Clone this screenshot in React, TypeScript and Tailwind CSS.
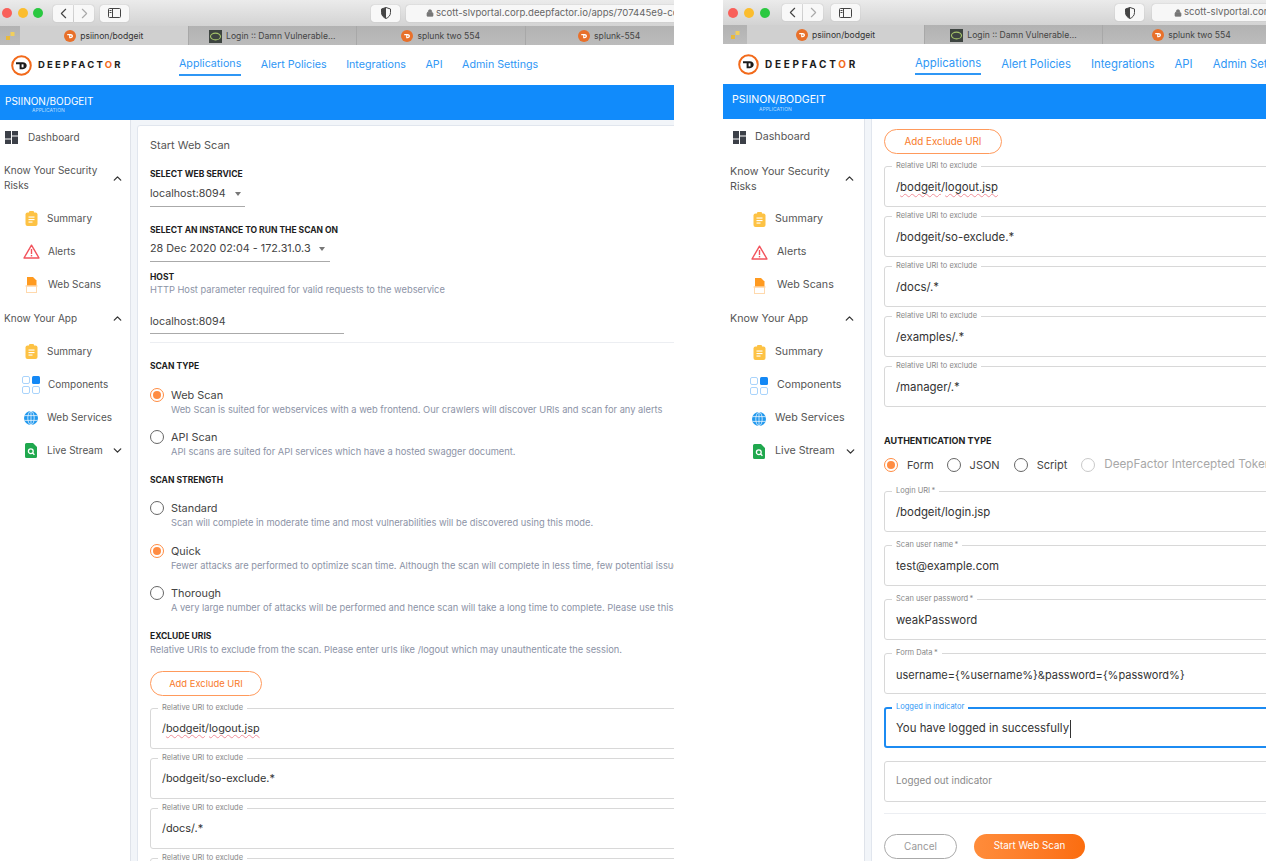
import React from "react";
import { ChevronUp, ChevronDown, ChevronLeft, ChevronRight, Lock } from "lucide-react";

const Favicon = () => (
  <svg width="12" height="12" viewBox="0 0 13 13" className="shrink-0">
    <circle cx="6.5" cy="6.5" r="6.5" fill="#e8702a" />
    <path d="M3.5 4.2h3.6c1.6 0 2.6 1 2.6 2.4S8.7 9 7.1 9H5.6V5.6H3.5z" fill="#fff" />
    <rect x="6.8" y="6" width="1.2" height="1.6" fill="#e8702a" />
  </svg>
);

const DvwaIcon = () => (
  <svg width="13" height="13" viewBox="0 0 13 13" className="shrink-0">
    <rect width="13" height="13" fill="#3d4440" />
    <ellipse cx="6.5" cy="6.5" rx="5" ry="3.4" fill="none" stroke="#a5c46a" strokeWidth="1.1" />
  </svg>
);

const Logo = () => (
  <svg width="21" height="21" viewBox="0 0 21 21" className="shrink-0">
    <circle cx="10.5" cy="10.5" r="9.3" fill="#fff" stroke="#f26a1b" strokeWidth="2" />
    <path d="M5 7.2h6.8c2.3 0 3.9 1.4 3.9 3.4s-1.6 3.6-3.9 3.6H8.6V9.2H5z" fill="#1c1c1c" />
    <rect x="10.6" y="9.3" width="1.9" height="3.1" fill="#fff" />
  </svg>
);

const Dashboard = () => (
  <svg width="13" height="13" viewBox="0 0 13 13">
    <rect x="0" y="0" width="6" height="7.5" fill="#3c4048" />
    <rect x="7" y="0" width="6" height="4.5" fill="#3c4048" />
    <rect x="0" y="8.5" width="6" height="4.5" fill="#3c4048" />
    <rect x="7" y="5.5" width="6" height="7.5" fill="#3c4048" />
  </svg>
);

const Clipboard = () => (
  <svg width="13" height="15" viewBox="0 0 13 15">
    <rect x="0.5" y="1.5" width="12" height="13.5" rx="2" fill="#fdc244" />
    <rect x="4" y="0" width="5" height="3" rx="1" fill="#fdc244" />
    <rect x="3.5" y="5.5" width="6" height="1.1" fill="#fff" />
    <rect x="3.5" y="8" width="6" height="1.1" fill="#fff" />
    <rect x="3.5" y="10.5" width="4" height="1.1" fill="#fff" />
  </svg>
);

const Alert = () => (
  <svg width="17" height="15" viewBox="0 0 17 15">
    <path d="M8.5 1.2 16 14H1z" fill="#fff" stroke="#f2535c" strokeWidth="1.4" strokeLinejoin="round" />
    <rect x="7.8" y="5" width="1.4" height="5" fill="#f2535c" />
    <rect x="7.8" y="11" width="1.4" height="1.4" fill="#f2535c" />
  </svg>
);

const WebScan = () => (
  <svg width="13" height="16" viewBox="0 0 13 16">
    <path d="M2 0h6l3.5 3.5V9H2z" fill="#ff9a1f" />
    <path d="M0.5 9h12" stroke="#ffc98a" strokeWidth="1" />
    <rect x="1.5" y="9" width="10" height="6.5" fill="none" stroke="#ffd9ad" strokeWidth="1" />
  </svg>
);

const Components = () => (
  <svg width="18" height="18" viewBox="0 0 18 18">
    <rect x="0.5" y="0.5" width="7" height="7" rx="1.5" fill="#fff" stroke="#a9d3fb" />
    <rect x="10" y="0" width="8" height="8" rx="1.5" fill="#1488f5" />
    <rect x="0.5" y="10.5" width="7" height="7" rx="1.5" fill="#fff" stroke="#a9d3fb" />
    <rect x="10.5" y="10.5" width="7" height="7" rx="1.5" fill="#fff" stroke="#a9d3fb" />
  </svg>
);

const Globe = () => (
  <svg width="14" height="14" viewBox="0 0 14 14">
    <circle cx="7" cy="7" r="7" fill="#2299ee" />
    <g fill="none" stroke="#fff" strokeWidth="0.7">
      <ellipse cx="7" cy="7" rx="3.2" ry="6.8" />
      <path d="M7 0v14M0.4 4.6h13.2M0.4 9.4h13.2" />
    </g>
  </svg>
);

const LiveStream = () => (
  <svg width="12" height="15" viewBox="0 0 12 15">
    <path d="M1.5 0H8l4 4v9.5a1.5 1.5 0 0 1-1.5 1.5h-9A1.5 1.5 0 0 1 0 13.5v-12A1.5 1.5 0 0 1 1.5 0z" fill="#20a84e" />
    <circle cx="5.8" cy="8.2" r="2.4" fill="none" stroke="#fff" strokeWidth="1.3" />
    <path d="M7.6 10l1.8 1.8" stroke="#fff" strokeWidth="1.3" />
  </svg>
);

const Shield = () => (
  <svg width="10" height="12" viewBox="0 0 10 12">
    <path d="M5 0.5 9.5 2v3.5c0 3-2 5-4.5 6-2.5-1-4.5-3-4.5-6V2z" fill="none" stroke="#444" strokeWidth="1" />
    <path d="M5 0.5 0.5 2v3.5c0 3 2 5 4.5 6z" fill="#444" />
  </svg>
);

const SidebarToggle = () => (
  <svg width="13" height="10" viewBox="0 0 13 10" fill="none" stroke="#444" strokeWidth="1">
    <rect x="0.5" y="0.5" width="12" height="9" rx="1" />
    <path d="M4.5 0.5v9M1.5 2.5h2M1.5 4.5h2" />
  </svg>
);

function Toolbar({ url, right }: { url: string; right: boolean }) {
  const btn = "shrink-0 h-[17px] bg-[#f8f8f8] shadow-[0_0_1px_#9a9a9a] flex items-center justify-center";
  return (
    <div className={`flex items-center bg-gradient-to-b from-[#ebebeb] to-[#d3d3d3] ${right ? "h-[25px]" : "h-[26px]"}`}>
      <div className={`flex items-center shrink-0 ${right ? "gap-[6px] pl-[5px] w-[59px]" : "gap-[5.5px] pl-[2px] w-[53px]"}`}>
        <span className="w-[10px] h-[10px] rounded-full bg-[#f9605a]" />
        <span className="w-[10px] h-[10px] rounded-full bg-[#fbbd2e]" />
        <span className="w-[10px] h-[10px] rounded-full bg-[#2ac840]" />
      </div>
      <div className="flex gap-px shrink-0">
        <span className={`${btn} w-[20px] rounded-l-[3px] text-[#444]`}><ChevronLeft size={17} strokeWidth={1.6} /></span>
        <span className={`${btn} w-[20px] rounded-r-[3px] text-[#aaa]`}><ChevronRight size={17} strokeWidth={1.6} /></span>
      </div>
      <span className={`${btn} w-[29px] rounded-[3px] ${right ? "ml-[8px]" : "ml-[6px]"}`}><SidebarToggle /></span>
      <span className={`${btn} w-[29px] rounded-[3px] ${right ? "ml-[255px]" : "ml-[242px]"}`}><Shield /></span>
      <div className={`h-[17px] w-[600px] shrink-0 rounded-[3px] bg-[#f7f7f7] shadow-[0_0_1px_#9a9a9a] flex items-center gap-[2px] text-[9.6px] text-[#666] whitespace-nowrap ${right ? "ml-[8px] pl-[22px]" : "ml-[6px] pl-[20px]"}`}>
        <Lock size={8} fill="#777" stroke="#777" />
        <span>{url}</span>
      </div>
    </div>
  );
}

function Tabs({ right }: { right: boolean }) {
  const cell = `${right ? "w-[178px]" : "w-[168.5px]"} shrink-0 flex items-center justify-center gap-[4px] pt-px border-r border-[#a8a8a8] text-[8.6px] whitespace-nowrap`;
  const tabs: [string, React.ReactNode][] = right
    ? [["Login :: Damn Vulnerable...", <DvwaIcon key="a" />], ["splunk two 554", <Favicon key="b" />]]
    : [["Login :: Damn Vulnerable...", <DvwaIcon key="a" />], ["splunk two 554", <Favicon key="b" />], ["splunk-554", <Favicon key="c" />]];
  return (
    <div className="flex h-[19px] bg-gradient-to-b from-[#b2b2b2] to-[#bcbcbc] overflow-hidden">
      <div className={`${right ? "w-[24px]" : "w-[20px]"} shrink-0 flex items-center justify-center`}>
        <svg width="9" height="8" viewBox="0 0 9 8"><rect x="0" y="4" width="4" height="4" fill="#e8b93c" /><rect x="4.5" y="0" width="4" height="4" fill="#f2cf5c" /></svg>
      </div>
      <div className={`${cell} bg-[#d0d0d0] text-[#333]`}><Favicon /><span>psiinon/bodgeit</span></div>
      {tabs.map(([t, icon]) => (
        <div key={t} className={`${cell} text-[#444]`}>{icon}<span>{t}</span></div>
      ))}
    </div>
  );
}

function TopNav({ right }: { right: boolean }) {
  const items = ["Alert Policies", "Integrations", "API", "Admin Settings"];
  return (
    <div className={`flex items-center h-[40px] bg-white pt-px ${right ? "pl-[15px] text-[11.35px]" : "pl-[11px] text-[10.7px]"}`}>
      <Logo />
      <div className={`ml-[6px] shrink-0 font-bold text-[#1c1c1c] ${right ? "w-[150px] text-[10px] tracking-[2.7px]" : "w-[141px] text-[9.5px] tracking-[2.2px]"}`}>
        DEEPFACT<span className="text-[#f26a1b]">O</span>R
      </div>
      <div className={`flex items-center text-[#2f97f5] whitespace-nowrap ${right ? "gap-[20px]" : "gap-[19.5px]"}`}>
        <span className="border-b-2 border-[#2f97f5] pb-[1px] mt-[1px]">Applications</span>
        {items.map((i) => <span key={i}>{i}</span>)}
      </div>
    </div>
  );
}

function SideItem({ icon, label, right, chevron, shift }: { icon: React.ReactNode; label: string; right: boolean; chevron?: boolean; shift?: boolean }) {
  const gap = right ? (shift ? "ml-[5px]" : "ml-[3px]") : shift ? "ml-[4px]" : "ml-[3px]";
  return (
    <div className={`flex items-center h-[33px] text-[#555] ${right ? "pl-[23px] text-[10.7px]" : "pl-[18px] text-[10px]"}`}>
      <span className="w-[26px] flex justify-center shrink-0">{icon}</span>
      <span className={`${gap} whitespace-nowrap`}>{label}</span>
      {chevron && <ChevronDown size={13} strokeWidth={2.4} className={`text-[#333] ${right ? "ml-[9px]" : "ml-[8px]"}`} />}
    </div>
  );
}

function Sidebar({ right }: { right: boolean }) {
  const sec = `flex items-center justify-between leading-[15px] text-[#555] ${right ? "pl-[7px] pr-[8px] text-[10.7px]" : "pl-[4px] pr-[6px] text-[10px]"}`;
  return (
    <aside className={`shrink-0 bg-white border-r border-[#dfe3ea] ${right ? "w-[142px]" : "w-[131px]"}`}>
      <div className={`flex items-center text-[#555] ${right ? "h-[36px] pl-[10px] text-[10.7px]" : "h-[34px] pl-[5px] text-[10px]"}`}>
        <Dashboard />
        <span className={right ? "ml-[9px]" : "ml-[10px]"}>Dashboard</span>
      </div>
      <div className={`${sec} ${right ? "h-[48px] pb-px" : "h-[48px]"}`}>
        <span className={right ? "w-[108px]" : "w-[100px]"}>Know Your Security Risks</span>
        <ChevronUp size={13} strokeWidth={2.4} className="text-[#333]" />
      </div>
      <SideItem right={right} icon={<Clipboard />} label="Summary" />
      <SideItem right={right} icon={<Alert />} label="Alerts" shift />
      <SideItem right={right} icon={<WebScan />} label="Web Scans" shift />
      <div className={`${sec} ${right ? "h-[34px] pb-[2px]" : "h-[34px]"}`}>
        <span>Know Your App</span>
        <ChevronUp size={13} strokeWidth={2.4} className="text-[#333]" />
      </div>
      <SideItem right={right} icon={<Clipboard />} label="Summary" />
      <SideItem right={right} icon={<Components />} label="Components" shift />
      <SideItem right={right} icon={<Globe />} label="Web Services" />
      <SideItem right={right} icon={<LiveStream />} label="Live Stream" chevron />
    </aside>
  );
}

function Radio({ on, disabled }: { on?: boolean; disabled?: boolean }) {
  return (
    <span className={`w-[14px] h-[14px] shrink-0 rounded-full border-[1.5px] flex items-center justify-center ${on ? "border-[#ff8c42]" : disabled ? "border-[#c9c9c9]" : "border-[#666]"}`}>
      {on && <span className="w-[8px] h-[8px] rounded-full bg-[#ff8c42]" />}
    </span>
  );
}

function Option({ label, desc, on, className }: { label: string; desc: string; on?: boolean; className: string }) {
  return (
    <div className={className}>
      <div className="-mt-px flex items-center h-4 text-[10.9px] text-[#444]">
        <Radio on={on} />
        <span className="ml-[7px]">{label}</span>
      </div>
      <div className="pl-[21px] h-[14px] leading-[14px] text-[9.3px] text-[#8c93a6] whitespace-nowrap">{desc}</div>
    </div>
  );
}

const Heading = ({ children, className }: { children: React.ReactNode; className: string }) => (
  <div className={`h-3 leading-3 font-bold text-[#1d1d1d] whitespace-nowrap ${className}`}>{children}</div>
);

function Field({ label, value, large, placeholder, focus, required }: { label?: string; value?: React.ReactNode; large?: boolean; placeholder?: boolean; focus?: boolean; required?: boolean }) {
  const size = placeholder ? "text-[9.8px] text-[#8a8a8a]" : large ? "text-[11.4px] text-[#333] pt-[3px]" : "text-[10.9px] text-[#333]";
  return (
    <div className={`relative flex items-center h-[41px] rounded-[3px] bg-white whitespace-nowrap ${focus ? "border-2 border-[#1c8bf2] pl-[10px]" : "border border-[#d8d8d8] pl-[11px]"} ${size}`}>
      {label && (
        <span className={`absolute bg-white px-[4px] h-[9px] leading-[9px] text-[7.5px] ${focus ? "-top-[7px] left-[6px] text-[#2f97f5]" : "-top-[6px] left-[7px] text-[#888]"}`}>
          {label}{required && "\u2009*"}
        </span>
      )}
      {value}
    </div>
  );
}

const Squiggle = ({ children }: { children: React.ReactNode }) => (
  <span className="underline decoration-wavy decoration-[#f0909a] decoration-1 underline-offset-2">{children}</span>
);

const PillOutline = ({ large }: { large?: boolean }) => (
  <button className={`block h-[25px] pt-px rounded-full border border-[#ff9a5c] bg-white text-[#f87a2a] w-full ${large ? "text-[9.8px]" : "text-[9.4px]"}`}>Add Exclude URI</button>
);

function LeftCard() {
  return (
    <div className="mt-[5px] w-[800px] shrink-0 rounded-t-[3px] border border-[#e1e6ee] bg-white pl-[12px] pt-[11px] pb-[40px]">
      <div className="leading-4 text-[10.95px] text-[#555]">Start Web Scan</div>
      <Heading className="mt-[15px] text-[8.5px]">SELECT WEB SERVICE</Heading>
      <div className="mt-[2px] w-[95px] h-[25px] border-b border-[#aaa] flex items-center text-[10.7px] text-[#444]">
        localhost:8094
        <span className="ml-[9px] border-x-[3.5px] border-x-transparent border-t-[4px] border-t-[#777]" />
      </div>
      <Heading className="mt-[17px] text-[8.5px]">SELECT AN INSTANCE TO RUN THE SCAN ON</Heading>
      <div className="mt-px w-[180px] h-[25px] border-b border-[#aaa] flex items-center text-[10.8px] text-[#444] whitespace-nowrap">
        28 Dec 2020 02:04 - 172.31.0.3
        <span className="ml-[8px] border-x-[3.5px] border-x-transparent border-t-[4px] border-t-[#777]" />
      </div>
      <Heading className="mt-[9px] text-[8.5px]">HOST</Heading>
      <div className="h-[14px] leading-[14px] text-[9.3px] text-[#8c93a6]">HTTP Host parameter required for valid requests to the webservice</div>
      <div className="mt-[14px] w-[194px] h-[23px] pt-px border-b border-[#aaa] flex items-center text-[10.7px] text-[#444]">localhost:8094</div>
      <div className="mt-[8px] h-px bg-[#eceef2]" />
      <Heading className="mt-[17px] text-[8.5px]">SCAN TYPE</Heading>
      <Option className="mt-[16px]" on label="Web Scan" desc="Web Scan is suited for webservices with a web frontend. Our crawlers will discover URIs and scan for any alerts" />
      <Option className="mt-[13px]" label="API Scan" desc="API scans are suited for API services which have a hosted swagger document." />
      <Heading className="mt-[15px] text-[8.5px]">SCAN STRENGTH</Heading>
      <Option className="mt-[15px]" label="Standard" desc="Scan will complete in moderate time and most vulnerabilities will be discovered using this mode." />
      <Option className="mt-[14px]" on label="Quick" desc="Fewer attacks are performed to optimize scan time. Although the scan will complete in less time, few potential issues may be missed." />
      <Option className="mt-[13px]" label="Thorough" desc="A very large number of attacks will be performed and hence scan will take a long time to complete. Please use this mode with care." />
      <Heading className="mt-[15px] text-[8.5px]">EXCLUDE URIS</Heading>
      <div className="mt-px h-[14px] leading-[14px] text-[9.3px] text-[#8c93a6] whitespace-nowrap">Relative URIs to exclude from the scan. Please enter urls like /logout which may unauthenticate the session.</div>
      <div className="mt-[14px] w-[112px]"><PillOutline /></div>
      <div className="mt-[12px] flex flex-col gap-[9px]">
        <Field label="Relative URI to exclude" value={<span>/<Squiggle>bodgeit</Squiggle>/<Squiggle>logout.jsp</Squiggle></span>} />
        <Field label="Relative URI to exclude" value="/bodgeit/so-exclude.*" />
        <Field label="Relative URI to exclude" value="/docs/.*" />
        <Field label="Relative URI to exclude" value="/examples/.*" />
      </div>
    </div>
  );
}

function AuthRadio({ label, on, disabled, className }: { label: string; on?: boolean; disabled?: boolean; className: string }) {
  return (
    <span className={`flex items-center ${className}`}>
      <Radio on={on} disabled={disabled} />
      <span className={`ml-[9px] ${disabled ? "text-[#a8a8a8] text-[11.7px]" : "text-[#444]"}`}>{label}</span>
    </span>
  );
}

function RightCard() {
  return (
    <div className="w-[800px] shrink-0 border-l border-[#e1e6ee] bg-white pl-[12px] pt-[10px]">
      <div className="w-[118px]"><PillOutline large /></div>
      <div className="mt-[12px] flex flex-col gap-[9px]">
        <Field large label="Relative URI to exclude" value={<span>/<Squiggle>bodgeit</Squiggle>/<Squiggle>logout.jsp</Squiggle></span>} />
        <Field large label="Relative URI to exclude" value="/bodgeit/so-exclude.*" />
        <Field large label="Relative URI to exclude" value="/docs/.*" />
        <Field large label="Relative URI to exclude" value="/examples/.*" />
        <Field large label="Relative URI to exclude" value="/manager/.*" />
      </div>
      <Heading className="mt-[28px] text-[9px]">AUTHENTICATION TYPE</Heading>
      <div className="mt-[10px] h-4 flex items-center text-[11px] whitespace-nowrap">
        <AuthRadio on label="Form" className="" />
        <AuthRadio label="JSON" className="ml-[13px]" />
        <AuthRadio label="Script" className="ml-[14px]" />
        <AuthRadio disabled label="DeepFactor Intercepted Token" className="ml-[14px]" />
      </div>
      <div className="mt-[18px] flex flex-col gap-[13px]">
        <Field large required label="Login URI" value="/bodgeit/login.jsp" />
        <Field large required label="Scan user name" value="test@example.com" />
        <Field large required label="Scan user password" value="weakPassword" />
        <Field large required label="Form Data" value={<span className="text-[11px]">username={"{%username%}"}&amp;password={"{%password%}"}</span>} />
        <Field large focus label="Logged in indicator" value={<span className="border-r border-[#333] pr-px">You have logged in successfully</span>} />
        <Field large placeholder value="Logged out indicator" />
      </div>
      <div className="mt-[11px] h-px bg-[#eceef2]" />
      <div className="mt-[20px] flex gap-[17px] pb-[10px]">
        <button className="w-[73px] h-[25px] rounded-full border border-[#aaa] bg-white text-[10px] text-[#999]">Cancel</button>
        <button className="w-[111px] h-[25px] rounded-full bg-gradient-to-r from-[#ff8c3a] to-[#fb6d0e] text-[9.8px] text-white">Start Web Scan</button>
      </div>
    </div>
  );
}

function Browser({ right }: { right: boolean }) {
  return (
    <div className={`overflow-hidden h-[861px] ${right ? "flex-1 min-w-0" : "w-[674px] shrink-0"}`}>
      <Toolbar right={right} url="scott-slvportal.corp.deepfactor.io/apps/707445e9-cd9f-4f6d-8c1a-2b1e9f5f3a10/webscans/new" />
      <Tabs right={right} />
      <TopNav right={right} />
      <div className={`flex items-center h-[35px] bg-[#118bfb] text-white ${right ? "pl-[9px]" : "pl-[5px]"}`}>
        <div className={`relative -mt-[3px] leading-[14px] ${right ? "text-[10.6px]" : "text-[10px]"}`}>
          PSIINON/BODGEIT
          <span className="absolute left-[27px] top-[13px] text-[5px] leading-[7px] text-[#b8dcfd]">APPLICATION</span>
        </div>
      </div>
      <div className="flex">
        <Sidebar right={right} />
        <main className="flex-1 min-w-0 overflow-hidden bg-[#f2f5f9] h-[760px] pl-[6px]">
          {right ? <RightCard /> : <LeftCard />}
        </main>
      </div>
    </div>
  );
}

export default function App() {
  return (
    <div className="flex h-[861px] w-[1266px] overflow-hidden bg-white font-['Inter',sans-serif]">
      <Browser right={false} />
      <div className="w-[49px] shrink-0" />
      <Browser right />
    </div>
  );
}
